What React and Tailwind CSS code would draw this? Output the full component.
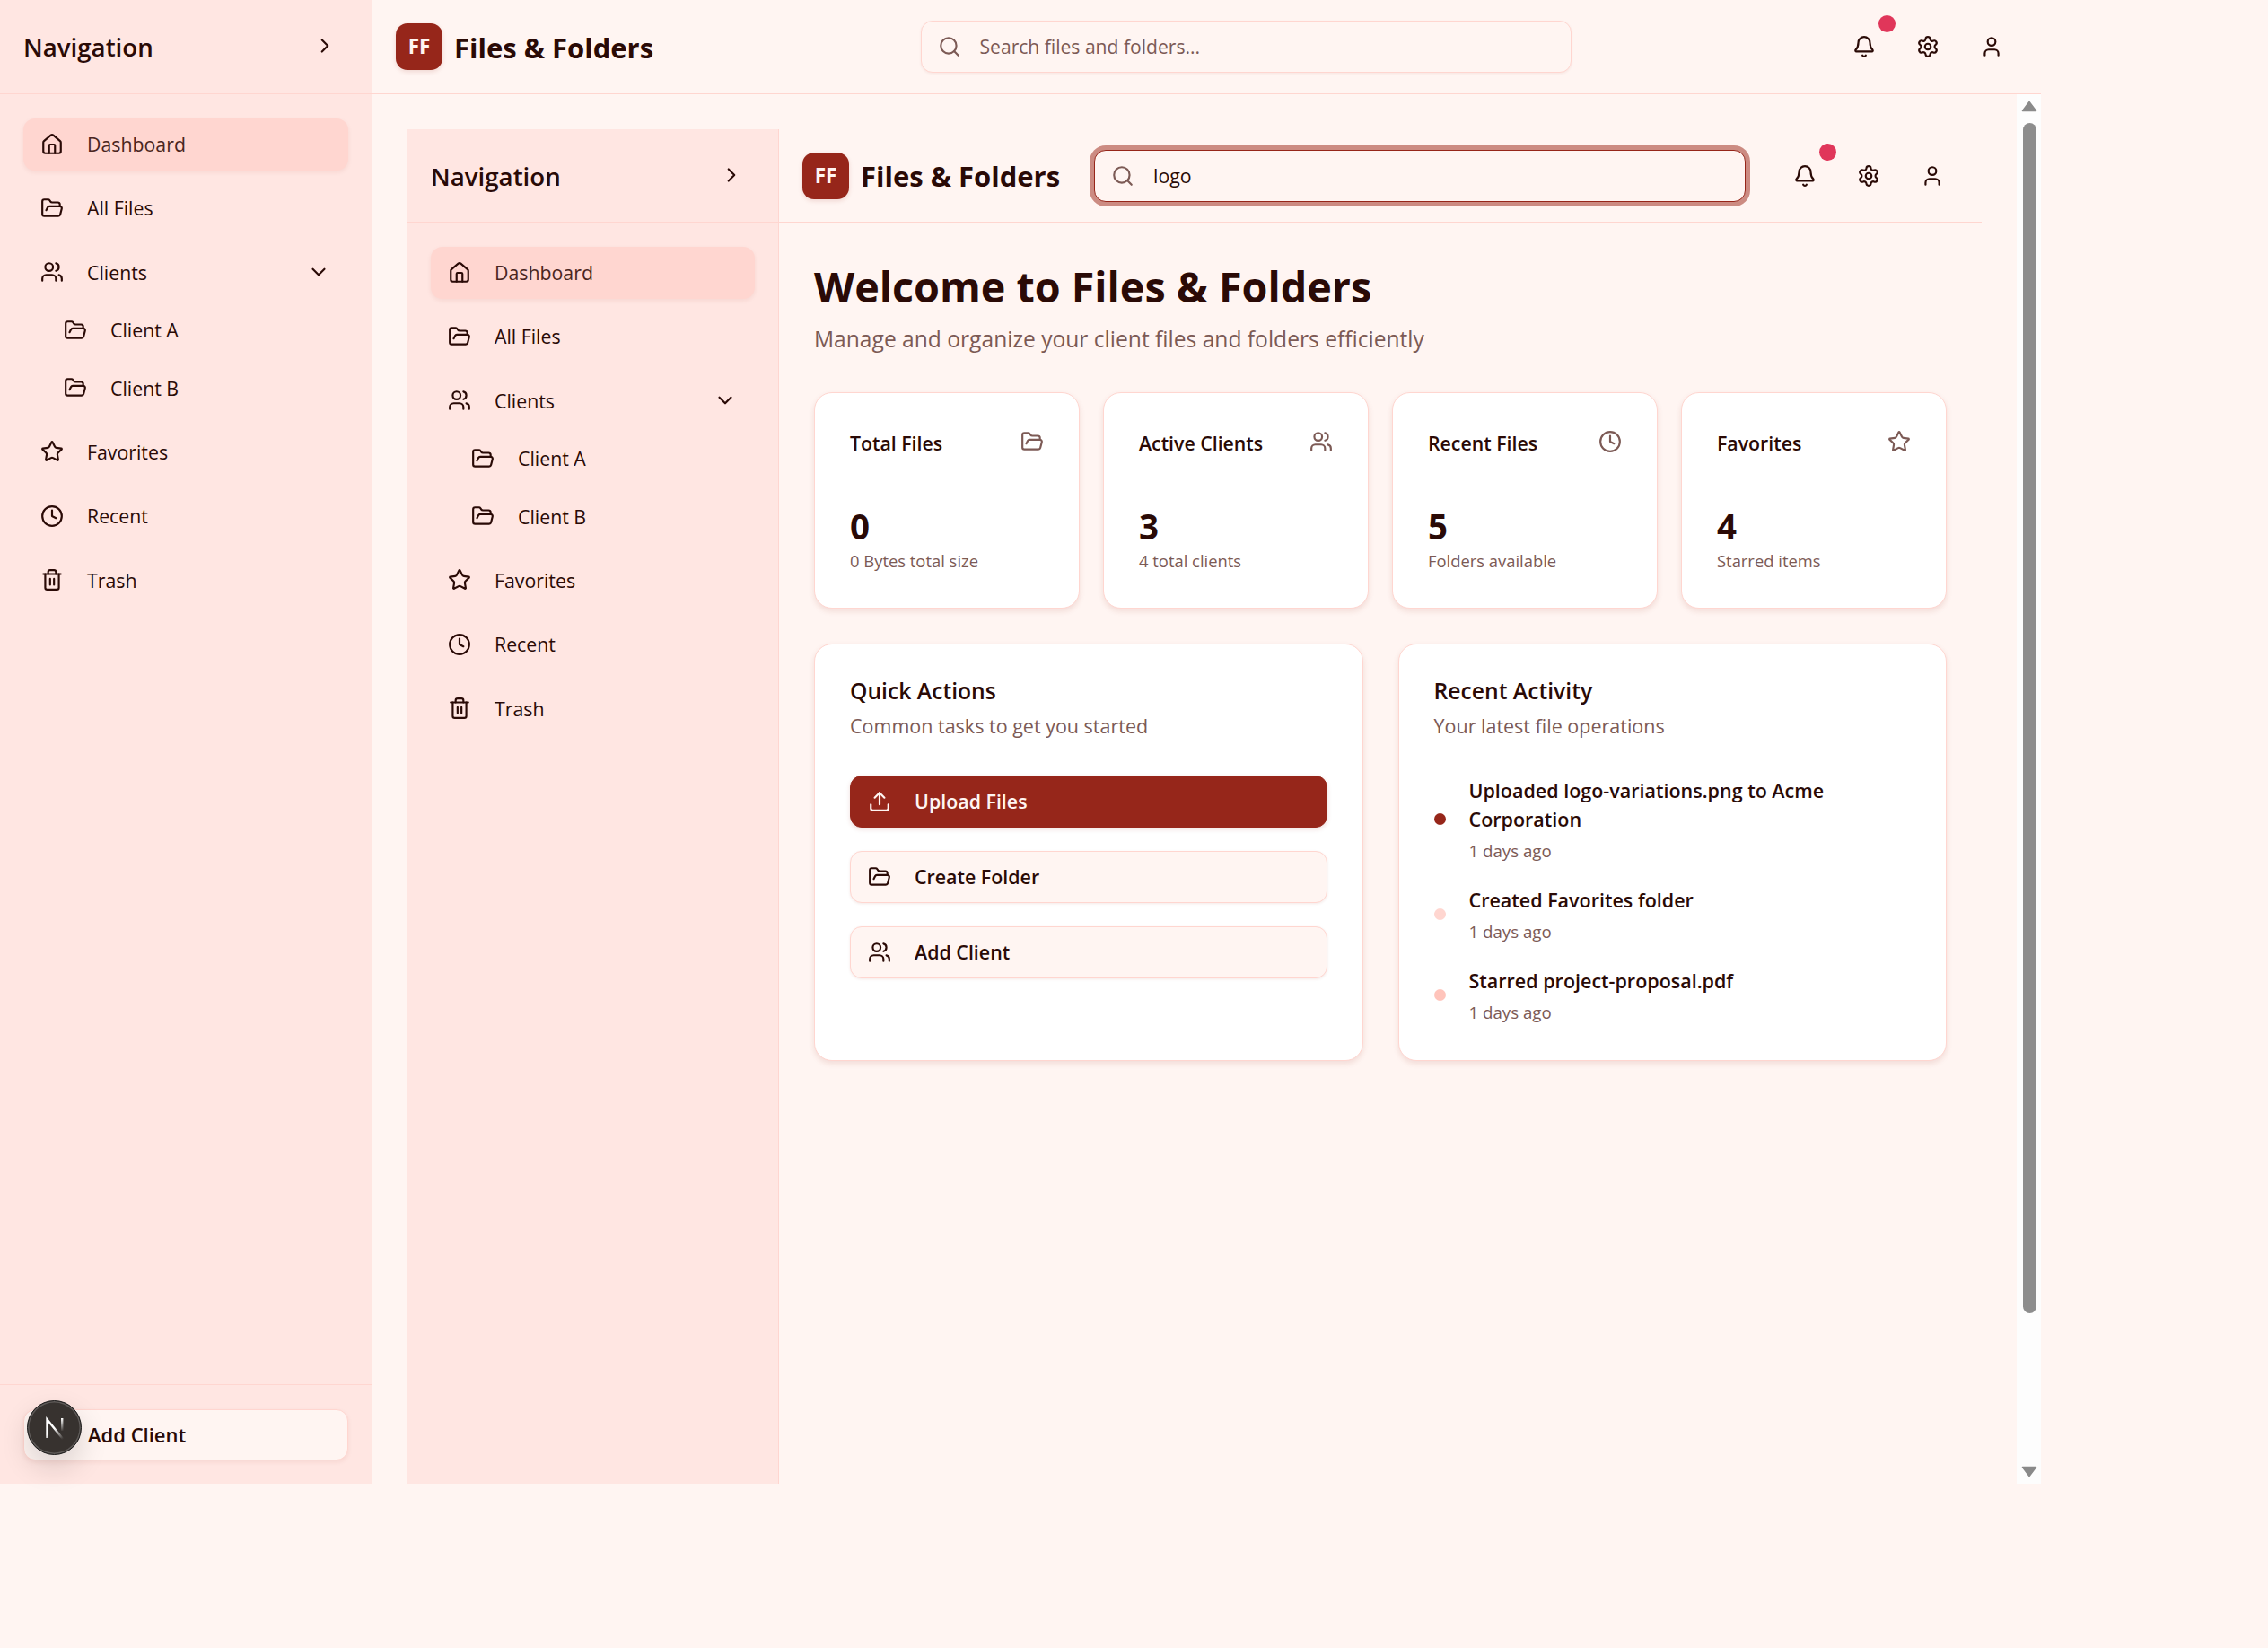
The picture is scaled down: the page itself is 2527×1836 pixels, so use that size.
import React from "react";
import {
  House, FolderOpen, Users, Star, Clock, Trash2, Upload, Bell, Settings, User, Search, ChevronRight, ChevronDown,
} from "lucide-react";

function NavRow({ icon: Icon, label, active, sub, chevron }) {
  return (
    <div
      className={`flex h-[58px] items-center gap-[26px] rounded-[13px] pr-[20px] text-[21.3px] text-[#2a0a06] ${sub ? "pl-[45px]" : "pl-[19px]"} ${active ? "bg-[#ffd6d0] shadow-[0_2px_5px_rgba(150,38,24,0.08)]" : ""}`}
    >
      <Icon size={26} strokeWidth={2} className="shrink-0" />
      <span className={`pt-[1px] ${active ? "text-[#4a2520]" : ""}`}>{label}</span>
      {chevron && <ChevronDown size={26} strokeWidth={2} className="ml-auto shrink-0" />}
    </div>
  );
}

function Sidebar({ footer, inner }) {
  return (
    <aside className={`flex h-full shrink-0 flex-col border-r border-[#ffd6d0] bg-[#ffe6e2] ${inner ? "w-[414px]" : "w-[415px]"}`}>
      <div className={`flex shrink-0 items-center justify-between border-b border-[#ffd6d0] pl-[26px] pr-[39px] ${inner ? "h-[104px]" : "h-[105px]"}`}>
        <span className="pt-[2px] text-[27.7px] font-semibold text-[#2a0a06]">Navigation</span>
        <ChevronRight size={26} strokeWidth={2} className="-translate-y-[1px] text-[#2a0a06]" />
      </div>
      <nav className={`flex flex-1 flex-col gap-[13.3px] px-[26px] ${inner ? "pt-[26.5px]" : "pt-[26.5px]"}`}>
        <NavRow icon={House} label="Dashboard" active />
        <NavRow icon={FolderOpen} label="All Files" />
        <div className="flex flex-col gap-[6.5px]">
          <NavRow icon={Users} label="Clients" chevron />
          <NavRow icon={FolderOpen} label="Client A" sub />
          <NavRow icon={FolderOpen} label="Client B" sub />
        </div>
        <NavRow icon={Star} label="Favorites" />
        <NavRow icon={Clock} label="Recent" />
        <NavRow icon={Trash2} label="Trash" />
      </nav>
      {footer && (
        <div className="shrink-0 border-t border-[#ffd6d0] px-[26px] pb-[26px] pt-[27px]">
          <div className="flex h-[57px] items-center rounded-[13px] border border-[#ffd6d0] bg-[#fff5f2] pl-[71px] text-[22px] font-semibold text-[#2a0a06] shadow-[0_2px_5px_rgba(150,38,24,0.08)]">
            Add Client
          </div>
        </div>
      )}
    </aside>
  );
}

function Logo() {
  return (
    <div className="flex items-center gap-[13px]">
      <div className="flex h-[52px] w-[52px] items-center justify-center rounded-[13px] bg-[#96261a] text-[22.5px] font-bold text-[#fff5f2] shadow-[0_2px_5px_rgba(150,38,24,0.15)]">
        FF
      </div>
      <span className="w-[224px] whitespace-nowrap pt-[2px] text-[31px] font-bold text-[#2a0a06]">Files &amp; Folders</span>
    </div>
  );
}

function HeaderIcons() {
  return (
    <div className="ml-auto flex items-center gap-[19px] text-[#2a0a06]">
      <div className="relative flex h-[52px] w-[52px] items-center justify-center">
        <Bell size={26} strokeWidth={2} />
        <span className="absolute -right-[9px] -top-[9.5px] h-[19px] w-[19px] rounded-full bg-[#e0365a]" />
      </div>
      <div className="flex h-[52px] w-[52px] items-center justify-center">
        <Settings size={26} strokeWidth={2} />
      </div>
      <div className="flex h-[52px] w-[52px] items-center justify-center">
        <User size={26} strokeWidth={2} />
      </div>
    </div>
  );
}

function StatCard({ title, icon: Icon, value, note }) {
  return (
    <div className="h-[241px] rounded-[20px] border border-[#ffd6d0] bg-white px-[39px] pt-[39px] shadow-[0_3px_6px_rgba(150,38,24,0.12)]">
      <div className="flex h-[32px] items-center justify-between">
        <span className="pt-[2px] text-[21.3px] font-semibold text-[#2a0a06]">{title}</span>
        <Icon size={26} strokeWidth={2} className="-translate-y-[1px] text-[#7c5a55]" />
      </div>
      <div className="mt-[51px] text-[38.5px] font-bold leading-[52px] text-[#2a0a06]">{value}</div>
      <div className="text-[18.4px] leading-[26px] text-[#7c5a55]">{note}</div>
    </div>
  );
}

function ActionButton({ icon: Icon, label, primary }) {
  return (
    <div
      className={`flex h-[58px] items-center gap-[26px] rounded-[13px] border pl-[19px] text-[21.4px] font-semibold ${primary ? "border-[#96261a] bg-[#96261a] text-[#fff5f2] shadow-[0_2px_5px_rgba(150,38,24,0.15)]" : "border-[#ffd6d0] bg-[#fff5f2] text-[#2a0a06] shadow-[0_1px_3px_rgba(150,38,24,0.1)]"}`}
    >
      <Icon size={26} strokeWidth={2} className="shrink-0" />
      <span className="pt-[2px]">{label}</span>
    </div>
  );
}

function Activity({ dot, text }) {
  return (
    <div className="flex items-center gap-[26px]">
      <span className={`h-[13px] w-[13px] shrink-0 rounded-full ${dot}`} />
      <div>
        <div className="text-[21.5px] font-semibold leading-[32px] text-[#2a0a06]">{text}</div>
        <div className="mt-[6px] text-[18.7px] leading-[26px] text-[#7c5a55]">1 days ago</div>
      </div>
    </div>
  );
}

function PanelHead({ title, sub }) {
  return (
    <>
      <div className="-mt-[2px] text-[24.7px] font-semibold leading-[30px] text-[#2a0a06]">{title}</div>
      <div className="mt-[8px] text-[21.5px] leading-[32px] text-[#7c5a55]">{sub}</div>
    </>
  );
}

function InnerApp() {
  return (
    <div className="flex h-full overflow-hidden">
      <Sidebar inner />
      <div className="flex min-w-0 flex-1 flex-col">
        <header className="flex h-[104px] shrink-0 items-center border-b border-[#ffd6d0] pl-[26px] pr-[29px]">
          <Logo />
          <div className="ml-[36px] flex h-[58px] w-[726px] items-center gap-[21px] rounded-[13px] border border-[#96261a] bg-[#fff5f2] pl-[18px] text-[21.3px] text-[#2a0a06] ring-[5px] ring-[#cc8b82]">
            <Search size={26} strokeWidth={2} className="shrink-0 text-[#7c5a55]" />
            logo
          </div>
          <HeaderIcons />
        </header>
        <main className="flex-1 px-[39px] pt-[42px]">
          <h1 className="text-[46.7px] font-bold leading-[58px] text-[#2a0a06]">Welcome to Files &amp; Folders</h1>
          <p className="mt-[10px] text-[24.6px] leading-[39px] text-[#7c5a55]">Manage and organize your client files and folders efficiently</p>
          <div className="mt-[39.5px] grid grid-cols-4 gap-[26px]">
            <StatCard title="Total Files" icon={FolderOpen} value="0" note="0 Bytes total size" />
            <StatCard title="Active Clients" icon={Users} value="3" note="4 total clients" />
            <StatCard title="Recent Files" icon={Clock} value="5" note="Folders available" />
            <StatCard title="Favorites" icon={Star} value="4" note="Starred items" />
          </div>
          <div className="mt-[39px] grid grid-cols-2 gap-[39px]">
            <section className="h-[465px] rounded-[20px] border border-[#ffd6d0] bg-white p-[39px] shadow-[0_3px_6px_rgba(150,38,24,0.12)]">
              <PanelHead title="Quick Actions" sub="Common tasks to get you started" />
              <div className="mt-[39px] flex flex-col gap-[26px]">
                <ActionButton icon={Upload} label="Upload Files" primary />
                <ActionButton icon={FolderOpen} label="Create Folder" />
                <ActionButton icon={Users} label="Add Client" />
              </div>
            </section>
            <section className="h-[465px] rounded-[20px] border border-[#ffd6d0] bg-white p-[39px] shadow-[0_3px_6px_rgba(150,38,24,0.12)]">
              <PanelHead title="Recent Activity" sub="Your latest file operations" />
              <div className="mt-[40px] flex flex-col gap-[26px]">
                <Activity dot="bg-[#96261a]" text="Uploaded logo-variations.png to Acme Corporation" />
                <Activity dot="bg-[#ffd6d0]" text="Created Favorites folder" />
                <Activity dot="bg-[#ffc4bb]" text="Starred project-proposal.pdf" />
              </div>
            </section>
          </div>
        </main>
      </div>
    </div>
  );
}

function Scrollbar() {
  return (
    <div className="flex h-full w-[27px] shrink-0 flex-col items-center bg-[#fdfdfd] pl-[1px]">
      <svg width="18" height="13" viewBox="0 0 18 13" className="mt-[7px] shrink-0">
        <path d="M9 1.5 L16.5 11.5 L1.5 11.5 Z" fill="#8a8a8a" stroke="#8a8a8a" strokeWidth="1.5" strokeLinejoin="round" />
      </svg>
      <div className="mt-[12px] h-[1326px] w-[15px] shrink-0 rounded-full bg-[#8d8d8d]" />
      <svg width="18" height="13" viewBox="0 0 18 13" className="mb-[7px] mt-auto shrink-0">
        <path d="M9 11.5 L16.5 1.5 L1.5 1.5 Z" fill="#8a8a8a" stroke="#8a8a8a" strokeWidth="1.5" strokeLinejoin="round" />
      </svg>
    </div>
  );
}

export default function App() {
  return (
    <div className="relative min-h-screen bg-[#fff5f2] font-['Open_Sans','Noto_Sans',sans-serif]">
      <div className="flex h-[1653px] w-[2274px] overflow-hidden">
        <Sidebar footer />
        <div className="flex min-w-0 flex-1 flex-col">
          <header className="flex h-[105px] shrink-0 items-center border-b border-[#ffd6d0] pl-[26px] pr-[29px]">
            <Logo />
            <div className="ml-[295.5px] flex h-[58px] w-[725px] items-center gap-[21px] rounded-[13px] border border-[#ffd6d0] bg-[#fff5f2] pl-[18px] text-[21.1px] text-[#7c5a55] shadow-[0_1px_3px_rgba(150,38,24,0.08)]">
              <Search size={26} strokeWidth={2} className="shrink-0" />
              Search files and folders...
            </div>
            <HeaderIcons />
          </header>
          <div className="flex min-h-0 flex-1">
            <div className="min-w-0 flex-1 pl-[39px] pr-[39px] pt-[39px]">
              <InnerApp />
            </div>
            <Scrollbar />
          </div>
        </div>
      </div>
      <div className="absolute left-[30px] top-[1560px] flex h-[61px] w-[61px] items-center justify-center rounded-full border border-[#1c1c1c] bg-[#37322f] shadow-[inset_0_0_0_1.5px_#5e5a58,0_14px_32px_rgba(0,0,0,0.14)]">
        <svg width="26" height="26" viewBox="0 0 26 26" fill="none">
          <defs>
            <linearGradient id="nfade" gradientUnits="userSpaceOnUse" x1="4" y1="2" x2="22" y2="24">
              <stop offset="0.5" stopColor="#fff" />
              <stop offset="1" stopColor="#fff" stopOpacity="0.05" />
            </linearGradient>
            <linearGradient id="nfade2" gradientUnits="userSpaceOnUse" x1="21" y1="2" x2="21" y2="16">
              <stop offset="0" stopColor="#fff" />
              <stop offset="1" stopColor="#fff" stopOpacity="0.05" />
            </linearGradient>
          </defs>
          <path d="M4.5 24 V3.5 L22 25" stroke="url(#nfade)" strokeWidth="2.4" />
          <rect x="20" y="2" width="2.4" height="14" fill="url(#nfade2)" />
        </svg>
      </div>
    </div>
  );
}
